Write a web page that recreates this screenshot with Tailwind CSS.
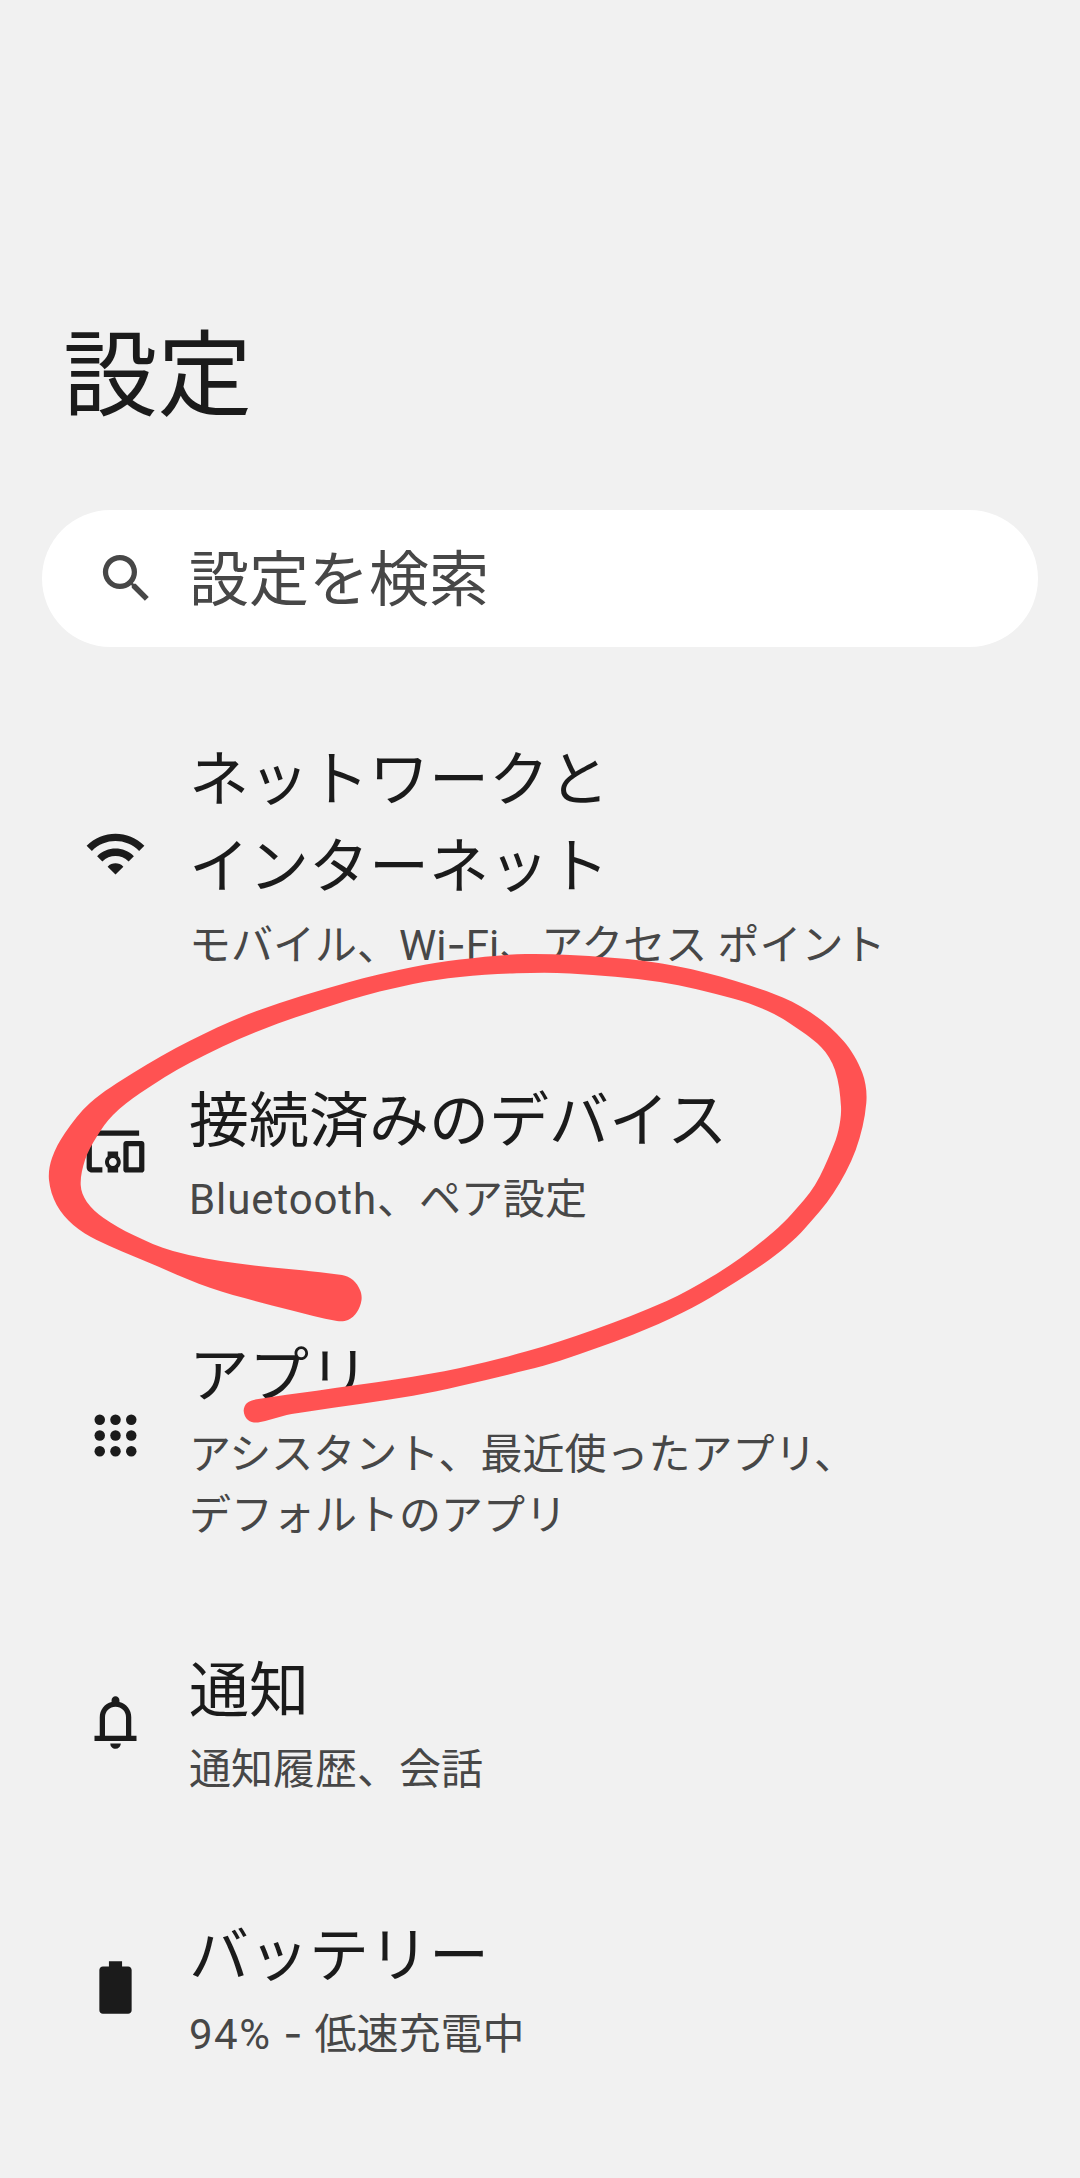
<!DOCTYPE html>
<html lang="ja">

<head>
    <meta charset="UTF-8">
    <meta name="viewport" content="width=device-width, initial-scale=1.0">
    <title>設定</title>
    <script src="https://cdn.jsdelivr.net/npm/@tailwindcss/browser@4"></script>
</head>

<body class="relative w-[1080px] h-[2178px] overflow-hidden bg-[#f1f1f1] text-[#1b1b1b] font-['Roboto','Noto_Sans_CJK_JP',sans-serif]">

    <h1 class="pt-[308px] pl-[63px] text-[94.5px] leading-[137px]">設定</h1>

    <!-- Search bar -->
    <div class="mt-[65px] mx-[42px] h-[137px] pl-[53px] flex items-center rounded-full bg-white text-[#474747]">
        <svg class="size-[63px]" viewBox="0 0 24 24" fill="currentColor" aria-hidden="true">
            <path d="M15.5 14h-.79l-.28-.27A6.47 6.47 0 0 0 16 9.5 6.5 6.5 0 1 0 9.5 16c1.61 0 3.09-.59 4.23-1.57l.27.28v.79l5 4.99L20.49 19l-4.99-5zm-6 0C7.01 14 5 11.99 5 9.5S7.01 5 9.5 5 14 7.01 14 9.5 11.99 14 9.5 14z" />
        </svg>
        <span class="ml-[31px] pt-1 text-[60px] leading-[87px]">設定を検索</span>
    </div>

    <!-- Settings list -->
    <ul class="mt-[89px] pl-[84px]">
        <li class="flex items-center gap-[42px]">
            <svg class="size-[63px]" viewBox="0 0 24 24" fill="currentColor" aria-hidden="true">
                <path d="M1 9l2 2c4.97-4.97 13.03-4.97 18 0l2-2C16.93 2.93 7.08 2.93 1 9zm8 8l3 3 3-3c-1.65-1.66-4.34-1.66-6 0zm-4-4l2 2c2.76-2.76 7.24-2.76 10 0l2-2C15.14 9.14 8.87 9.14 5 13z" />
            </svg>
            <div class="pt-px -mb-[5px]">
                <p class="text-[60px] leading-[87px]">ネットワークと<br>インターネット</p>
                <p class="mt-1 text-[42px] leading-[61px] text-[#474747]">モバイル、Wi<span class="font-['Inter'] leading-none">-</span>Fi、アクセス ポイント</p>
            </div>
        </li>
        <li class="mt-[106px] flex items-center gap-[42px]">
            <svg class="size-[63px]" viewBox="0 0 24 24" fill="currentColor" aria-hidden="true">
                <path d="M3 6h18V4H3c-1.1 0-2 .9-2 2v12c0 1.1.9 2 2 2h4v-2H3V6zm10 6H9v1.78c-.61.55-1 1.33-1 2.22s.39 1.67 1 2.22V20h4v-1.78c.61-.55 1-1.34 1-2.22s-.39-1.67-1-2.22V12zm-2 5.5c-.83 0-1.5-.67-1.5-1.5s.67-1.5 1.5-1.5 1.5.67 1.5 1.5-.67 1.5-1.5 1.5zM22 8h-6c-.5 0-1 .5-1 1v10c0 .5.5 1 1 1h6c.5 0 1-.5 1-1V9c0-.5-.5-1-1-1zm-1 10h-4v-8h4v8z" />
            </svg>
            <div class="pt-px -mb-[5px]">
                <p class="text-[60px] leading-[87px]">接続済みのデバイス</p>
                <p class="mt-1 text-[42px] leading-[61px] text-[#474747]"><span class="tracking-[0.9px]">Bluetooth</span>、ペア設定</p>
            </div>
        </li>
        <li class="mt-[106px] flex items-center gap-[42px]">
            <svg class="size-[63px]" viewBox="0 0 24 24" fill="currentColor" aria-hidden="true">
                <circle cx="6" cy="6" r="2" />
                <circle cx="12" cy="6" r="2" />
                <circle cx="18" cy="6" r="2" />
                <circle cx="6" cy="12" r="2" />
                <circle cx="12" cy="12" r="2" />
                <circle cx="18" cy="12" r="2" />
                <circle cx="6" cy="18" r="2" />
                <circle cx="12" cy="18" r="2" />
                <circle cx="18" cy="18" r="2" />
            </svg>
            <div class="pt-0.5 -mb-1.5">
                <p class="text-[60px] leading-[87px]">アプリ</p>
                <p class="mt-1 text-[42px] leading-[61px] text-[#474747]">アシスタント、最近使ったアプリ、<br>デフォルトのアプリ</p>
            </div>
        </li>
        <li class="mt-[108px] flex items-center gap-[42px]">
            <svg class="size-[63px]" viewBox="0 0 24 24" fill="currentColor" aria-hidden="true">
                <path d="M4 19v-2h2v-7c0-1.383.417-2.612 1.25-3.688C8.083 5.237 9.167 4.533 10.5 4.2v-.7c0-.417.146-.77.438-1.062C11.229 2.146 11.583 2 12 2s.77.146 1.063.438c.291.291.437.645.437 1.062v.7c1.333.333 2.417 1.037 3.25 2.112C17.583 7.388 18 8.617 18 10v7h2v2H4zm8 3c-.55 0-1.02-.196-1.412-.587A1.926 1.926 0 0 1 10 20h4c0 .55-.196 1.02-.588 1.413A1.926 1.926 0 0 1 12 22zm-4-5h8v-7c0-1.1-.392-2.042-1.175-2.825C14.042 6.392 13.1 6 12 6s-2.042.392-2.825 1.175C8.392 7.958 8 8.9 8 10v7z" />
            </svg>
            <div class="-mb-1">
                <p class="text-[60px] leading-[87px]">通知</p>
                <p class="mt-1 text-[42px] leading-[61px] text-[#474747]">通知履歴、会話</p>
            </div>
        </li>
        <li class="mt-[117px] flex items-center gap-[42px]">
            <svg class="size-[63px]" viewBox="0 0 24 24" fill="currentColor" aria-hidden="true">
                <path d="M9.5 2h5v2h2.3c.75 0 1.35.6 1.35 1.35v15.3c0 .75-.6 1.35-1.35 1.35H7.2c-.75 0-1.35-.6-1.35-1.35V5.35C5.85 4.6 6.45 4 7.2 4h2.3z" />
            </svg>
            <div class="-mb-1">
                <p class="text-[60px] leading-[87px]">バッテリー</p>
                <p class="mt-1 text-[42px] leading-[61px] text-[#474747]"><span class="tracking-[1.5px]">94%</span><span class="font-['Inter'] leading-none"> - </span>低速充電中</p>
            </div>
        </li>
    </ul>

    <!-- Marker circle -->
    <svg class="absolute inset-0 w-[1080px] h-[2178px] pointer-events-none" viewBox="0 0 1080 2178" aria-hidden="true">
        <path id="marker" fill="#ff5252" />
    </svg>

    <script>
        // Outline of the marker stroke, clockwise from the thick end
        const points = [
            [342, 1275], [353, 1280], [360, 1290], [361.5, 1300], [357, 1312], [348, 1320], [337, 1321],
            [290, 1310], [210, 1287.7], [146.7, 1261.7], [96.7, 1240], [73.3, 1225], [56.7, 1205], [49, 1180],
            [52, 1158], [65, 1133], [90, 1103], [133, 1073], [190, 1040.7], [256.7, 1011], [346.7, 982.7],
            [413, 967], [460, 959.5], [516.7, 954.3], [570, 955], [646.7, 961.3], [706.7, 973], [773.3, 993.7],
            [810, 1012], [843.3, 1040.7], [862.3, 1072.7], [866.3, 1103], [855.7, 1150], [833.3, 1193.3],
            [805, 1228.3], [786.7, 1246], [763.3, 1264], [720, 1291.7], [683.3, 1312.3], [633.3, 1334.5],
            [560, 1360.7], [526.7, 1370], [460, 1386],
            [413, 1395.7], [306.7, 1411.7], [286.7, 1415], [258, 1422.5], [248, 1420], [243.7, 1411], [247, 1403],
            [256.7, 1399.3], [316.7, 1390.7], [396.7, 1379.3], [460, 1368], [526.7, 1351.3], [593, 1330],
            [666.7, 1301], [710, 1277.7], [740, 1258.3], [773.3, 1232], [791.7, 1214], [815, 1185],
            [831.7, 1150], [838.5, 1130], [841, 1106.7],
            [835, 1070], [821, 1047], [790, 1023.5], [766.7, 1010.5], [733, 998.5], [660, 982], [570, 973.5], [516.7, 973.3],
            [460, 977], [413, 984], [346.7, 1000.7], [256.7, 1031.7], [190, 1062.7], [140, 1093.3], [113, 1115],
            [96.7, 1136.7], [85, 1160], [80.7, 1185], [86.7, 1201.7], [103.3, 1217.7], [133.3, 1235],
            [173, 1251], [236.7, 1263.3]
        ];

        // Join the points with smooth curves
        const n = points.length;
        let d = 'M' + points[0];
        for (let i = 0; i < n; i++) {
            const a = points[(i + n - 1) % n], b = points[i], c = points[(i + 1) % n], e = points[(i + 2) % n];
            const len = Math.hypot(c[0] - b[0], c[1] - b[1]) / 3;
            const u = Math.hypot(c[0] - a[0], c[1] - a[1]);
            const v = Math.hypot(e[0] - b[0], e[1] - b[1]);
            d += 'C' + [
                b[0] + (c[0] - a[0]) / u * len, b[1] + (c[1] - a[1]) / u * len,
                c[0] - (e[0] - b[0]) / v * len, c[1] - (e[1] - b[1]) / v * len,
                c[0], c[1]
            ];
        }
        document.getElementById('marker').setAttribute('d', d + 'Z');
    </script>

</body>

</html>
